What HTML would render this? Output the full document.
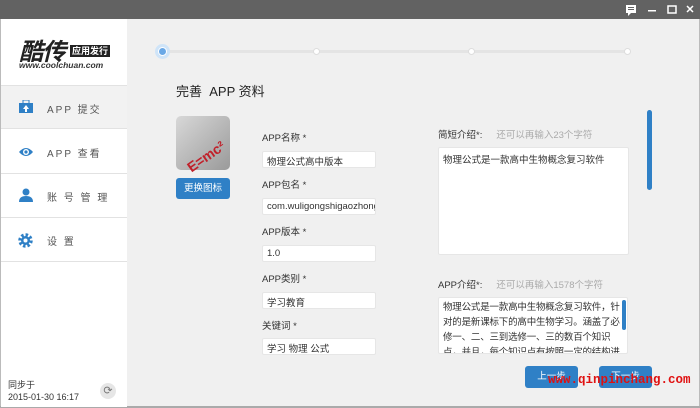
<!DOCTYPE html><html><head><style>
*{margin:0;padding:0;box-sizing:border-box}
body{width:700px;height:408px;overflow:hidden;background:#f0f0f0;font-family:"Liberation Sans","Noto Sans CJK SC",sans-serif;position:relative;color:#333}
.a{position:absolute}
.top{left:0;top:0;width:700px;height:19px;background:#626262}
.side{left:1px;top:19px;width:126px;height:388px;background:#fff}
.nav{left:1px;width:126px;height:44px;border-bottom:1px solid #e2e2e2;font-size:10px;letter-spacing:2px;color:#555}
.nav span{position:absolute;left:46px;top:15px}
.lab{font-size:9.5px;color:#333;left:262px}
.inp{left:262px;width:114px;height:17px;background:#fff;border:1px solid #e6e6e6;border-radius:2px;font-size:9.5px;padding:2px 4px;white-space:nowrap;overflow:hidden}
.dot{width:7px;height:7px;border-radius:50%;background:#fff;border:1px solid #ddd;top:48px}
.btn{background:#2f80c6;color:#fff;font-size:9.5px;text-align:center;border-radius:3px}
</style></head><body>
<div class="a top"></div>
<svg class="a" style="left:624px;top:4px" width="70" height="12"><rect x="2" y="1" width="10" height="8" fill="#fff"/><path d="M4 9 L4 12 L7 9" fill="#fff"/><rect x="4" y="3" width="6" height="1" fill="#626262"/><rect x="4" y="5" width="6" height="1" fill="#626262"/><rect x="24" y="6" width="8" height="1.5" fill="#fff"/><rect x="44" y="2" width="8" height="7" fill="none" stroke="#fff" stroke-width="1.5"/><path d="M63 2 L69 8 M69 2 L63 8" stroke="#fff" stroke-width="1.5"/></svg>
<div class="a" style="left:0;top:19px;width:1px;height:389px;background:#bbb"></div>
<div class="a" style="left:699px;top:19px;width:1px;height:389px;background:#bbb"></div>
<div class="a" style="left:0;top:406px;width:700px;height:2px;background:#aaa"></div>
<div class="a side"></div>
<div class="a" style="left:19px;top:32px;font-size:24px;font-weight:bold;font-style:italic;color:#222;letter-spacing:-1px">酷传</div>
<div class="a" style="left:70px;top:45px;background:#222;color:#fff;font-size:9px;font-weight:bold;padding:0 2px;line-height:12px">应用发行</div>
<div class="a" style="left:19px;top:60px;font-size:8.5px;font-weight:bold;font-style:italic;color:#333">www.coolchuan.com</div>
<div class="a nav" style="top:85px;background:#f2f2f2;border-top:1px solid #e2e2e2"><span>APP 提交</span></div>
<svg class="a" style="left:19px;top:100px" width="14" height="13"><rect x="0" y="3" width="14" height="10" fill="#2f80c6"/><rect x="4" y="0" width="6" height="4" fill="none" stroke="#2f80c6"/><path d="M7 5 L4 9 H6 V12 H8 V9 H10Z" fill="#fff"/></svg>
<div class="a nav" style="top:130px"><span>APP 查看</span></div>
<svg class="a" style="left:18px;top:147px" width="16" height="10"><path d="M1 5 Q8 -3 15 5 Q8 13 1 5Z" fill="#2f80c6"/><circle cx="8" cy="5" r="3" fill="#fff"/><circle cx="8" cy="5" r="1.6" fill="#2f80c6"/></svg>
<div class="a nav" style="top:174px"><span>账 号 管 理</span></div>
<svg class="a" style="left:19px;top:188px" width="14" height="14"><circle cx="7" cy="4" r="3.5" fill="#2f80c6"/><path d="M0 14 Q0 8 7 8 Q14 8 14 14Z" fill="#2f80c6"/></svg>
<div class="a nav" style="top:218px"><span>设 置</span></div>
<svg class="a" style="left:18px;top:233px" width="15" height="15"><circle cx="7.5" cy="7.5" r="5.5" fill="none" stroke="#2f80c6" stroke-width="3.5" stroke-dasharray="2.4 1.9"/><circle cx="7.5" cy="7.5" r="4.5" fill="#2f80c6"/><circle cx="7.5" cy="7.5" r="2" fill="#fff"/></svg>
<div class="a" style="left:8px;top:379px;font-size:9px;line-height:12px;color:#333">同步于<br>2015-01-30 16:17</div>
<div class="a" style="left:100px;top:383px;width:16px;height:16px;border-radius:50%;background:#e6e6e6;color:#777;font-size:11px;text-align:center;line-height:16px">⟳</div>
<div class="a" style="left:162px;top:50px;width:466px;height:3px;background:#e4e4e4"></div>
<div class="a" style="left:155px;top:44px;width:15px;height:15px;border-radius:50%;background:#cfe4f8"></div>
<div class="a" style="left:158px;top:47px;width:9px;height:9px;border-radius:50%;background:#6aa8e6;border:1px solid #fff"></div>
<div class="a dot" style="left:313px"></div><div class="a dot" style="left:468px"></div><div class="a dot" style="left:624px"></div>
<div class="a" style="left:176px;top:81px;font-size:13px;color:#222">完善&nbsp; APP 资料</div>
<div class="a" style="left:176px;top:116px;width:54px;height:54px;border-radius:5px;background:linear-gradient(135deg,#d8d8d8,#9a9a9a)"></div>
<div class="a" style="left:184px;top:162px;font-size:14px;font-weight:bold;color:#c0202a;transform:rotate(-35deg);transform-origin:left top">E=mc²</div>
<div class="a btn" style="left:176px;top:178px;width:54px;height:21px;line-height:21px">更换图标</div>
<div class="a lab" style="top:130px">APP名称 *</div><div class="a inp" style="top:151px">物理公式高中版本</div>
<div class="a lab" style="top:177px">APP包名 *</div><div class="a inp" style="top:198px">com.wuligongshigaozhong</div>
<div class="a lab" style="top:224px">APP版本 *</div><div class="a inp" style="top:245px">1.0</div>
<div class="a lab" style="top:271px">APP类别 *</div><div class="a inp" style="top:292px">学习教育</div>
<div class="a lab" style="top:318px">关键词 *</div><div class="a inp" style="top:338px">学习 物理 公式</div>
<div class="a" style="left:438px;top:127px;font-size:9.5px">简短介绍*:<span style="color:#aaa;margin-left:14px">还可以再输入23个字符</span></div>
<div class="a" style="left:438px;top:147px;width:191px;height:108px;background:#fff;border:1px solid #e6e6e6;border-radius:2px;font-size:9.5px;padding:4px"> 物理公式是一款高中生物概念复习软件</div>
<div class="a" style="left:647px;top:110px;width:5px;height:80px;border-radius:3px;background:#2f80c6"></div>
<div class="a" style="left:438px;top:277px;font-size:9.5px">APP介绍*:<span style="color:#aaa;margin-left:14px">还可以再输入1578个字符</span></div>
<div class="a" style="left:438px;top:297px;width:190px;height:57px;background:#fff;border:1px solid #e6e6e6;border-radius:2px;font-size:9.5px;line-height:15px;padding:2px 0 0 4px;overflow:hidden;letter-spacing:-0.2px">物理公式是一款高中生物概念复习软件，针对的是新课标下的高中生物学习。涵盖了必修一、二、三到选修一、三的数百个知识点，并且，每个知识点有按照一定的结构进行梳理，让同学们学习起来更有效率，还可根</div>
<div class="a" style="left:622px;top:300px;width:4px;height:30px;border-radius:2px;background:#2f80c6"></div>
<div class="a btn" style="left:525px;top:366px;width:53px;height:22px;line-height:22px">上一步</div>
<div class="a btn" style="left:599px;top:366px;width:53px;height:22px;line-height:22px">下一步</div>
<div class="a" style="left:548px;top:373px;font-family:'Liberation Mono',monospace;font-size:12.5px;font-weight:bold;color:#e01010">www.qinpinchang.com</div>
</body></html>
